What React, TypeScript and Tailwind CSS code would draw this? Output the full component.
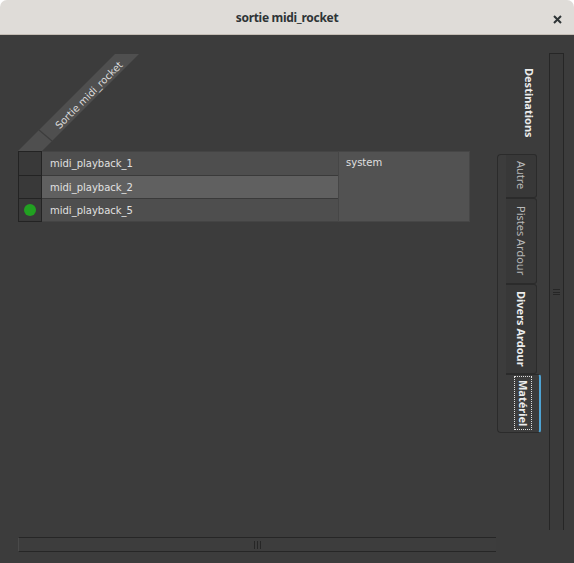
import React from "react";

type Row = { name: string; connected: boolean; highlight?: boolean };

const rows: Row[] = [
  { name: "midi_playback_1", connected: false },
  { name: "midi_playback_2", connected: false, highlight: true },
  { name: "midi_playback_5", connected: true },
];

const tabs = [
  { label: "Autre", h: "h-[44px]", bold: false, active: false },
  { label: "Pistes Ardour", h: "h-[86px]", bold: false, active: false },
  { label: "Divers Ardour", h: "h-[90px]", bold: true, active: false },
  { label: "Matériel", h: "h-[59px]", bold: true, active: true },
];

function ColumnHeader() {
  // diagonal source label drawn the way the port matrix paints it
  return (
    <svg width="130" height="98" viewBox="0 0 130 98" className="block">
      <polygon points="0,98 24,98 121,1 97,1" fill="#4f4f4f" />
      <line x1="21" y1="77" x2="34" y2="88" stroke="#3d3d3d" strokeWidth="1.2" />
      <text
        x="39"
        y="74"
        transform="rotate(-45 39 74)"
        fill="#dcdcdc"
        fontSize="10"
        fontFamily="'DejaVu Sans', sans-serif"
        dominantBaseline="central"
      >
        Sortie midi_rocket
      </text>
    </svg>
  );
}

function Matrix() {
  return (
    <div className="flex">
      <div className="flex w-[24px] flex-col border border-[#232323] bg-[#393939]">
        {rows.map((r, i) => (
          <div
            key={r.name}
            className={`flex h-[23px] items-center justify-center ${i > 0 ? "border-t border-[#232323]" : ""}`}
          >
            {r.connected ? <div className="h-[12px] w-[12px] rounded-full bg-[#21a021]" /> : null}
          </div>
        ))}
      </div>
      <div className="flex w-[296px] flex-col border-y border-[#444444]">
        {rows.map((r, i) => (
          <div
            key={r.name}
            className={`flex h-[23px] items-center pl-[8px] text-[10px] text-[#e0e0e0] ${
              r.highlight ? "bg-[#606060]" : "bg-[#4e4e4e]"
            } ${i > 0 ? "border-t border-[#3a3a3a]" : ""}`}
          >
            {r.name}
          </div>
        ))}
      </div>
      <div className="w-[132px] border border-[#464646] bg-[#525252] pl-[7px] pt-[3px] text-[10px] text-[#e0e0e0]">
        system
      </div>
    </div>
  );
}

export default function App() {
  return (
    <div className="flex h-[563px] w-[574px] flex-col overflow-hidden bg-white font-['Noto_Sans',sans-serif]">
      <div className="relative flex h-[35px] shrink-0 items-center justify-center rounded-t-[7px] border-b border-[#c4bdb5] bg-[#dfdcd8] pt-[2px]">
        <span className="text-[12px] font-bold tracking-[-0.3px] text-[#2e3436]">sortie midi_rocket</span>
        <svg width="9" height="9" viewBox="0 0 9 9" className="absolute left-[553px] top-[15px]">
          <path d="M1 1 L8 8 M8 1 L1 8" stroke="#2e3436" strokeWidth="2" />
        </svg>
      </div>

      <div className="flex flex-1 bg-[#3c3c3c]">
        <div className="flex w-[496px] flex-col pl-[18px] pt-[18px] pb-[11px] font-['DejaVu_Sans',sans-serif]">
          <ColumnHeader />
          <Matrix />
          <div className="flex-1" />
          <div className="flex h-[15px] items-center justify-center border-y border-l border-y-[#262626] border-l-[#4a4a4a] bg-[#3d3d3d]">
            <div className="flex gap-[2px]">
              <div className="h-[8px] w-px bg-[#262626]" />
              <div className="h-[8px] w-px bg-[#262626]" />
              <div className="h-[8px] w-px bg-[#262626]" />
            </div>
          </div>
        </div>

        <div className="flex w-[53px] flex-col items-start pt-[33px]">
          <div className="ml-[27px] text-[11px] font-bold leading-[13px] text-[#ececec] [writing-mode:vertical-rl]">
            Destinations
          </div>
          <div className="ml-[1px] mt-[16px] flex">
            <div className="w-[9px] rounded-l-[4px] border border-r-0 border-[#2b2b2b]" />
            <div className="flex flex-col">
              {tabs.map((t) => (
                <div
                  key={t.label}
                  className={`flex ${t.h} items-center justify-center rounded-r-[3px] border border-l-0 border-[#2b2b2b] ${
                    t.active ? "w-[35px] border-r-[2px] border-r-[#4ea3d3] bg-[#3c3c3c]" : "w-[31px] bg-[#383838]"
                  }`}
                >
                  <span
                    className={`text-[11px] leading-[14px] [writing-mode:vertical-rl] ${
                      t.bold ? "font-bold text-[#ececec]" : "text-[#b9b9b9]"
                    } ${t.active ? "border border-dotted border-[#e0e0e0] px-[3px] py-[1px]" : ""}`}
                  >
                    {t.label}
                  </span>
                </div>
              ))}
            </div>
          </div>
        </div>

        <div className="mt-[18px] mb-[33px] flex w-[15px] items-center justify-center border-x border-t border-[#262626] bg-[#3a3a3a]">
          <div className="flex flex-col gap-[1.5px]">
            <div className="h-px w-[7px] bg-[#262626]" />
            <div className="h-px w-[7px] bg-[#262626]" />
            <div className="h-px w-[7px] bg-[#262626]" />
          </div>
        </div>
      </div>
    </div>
  );
}
